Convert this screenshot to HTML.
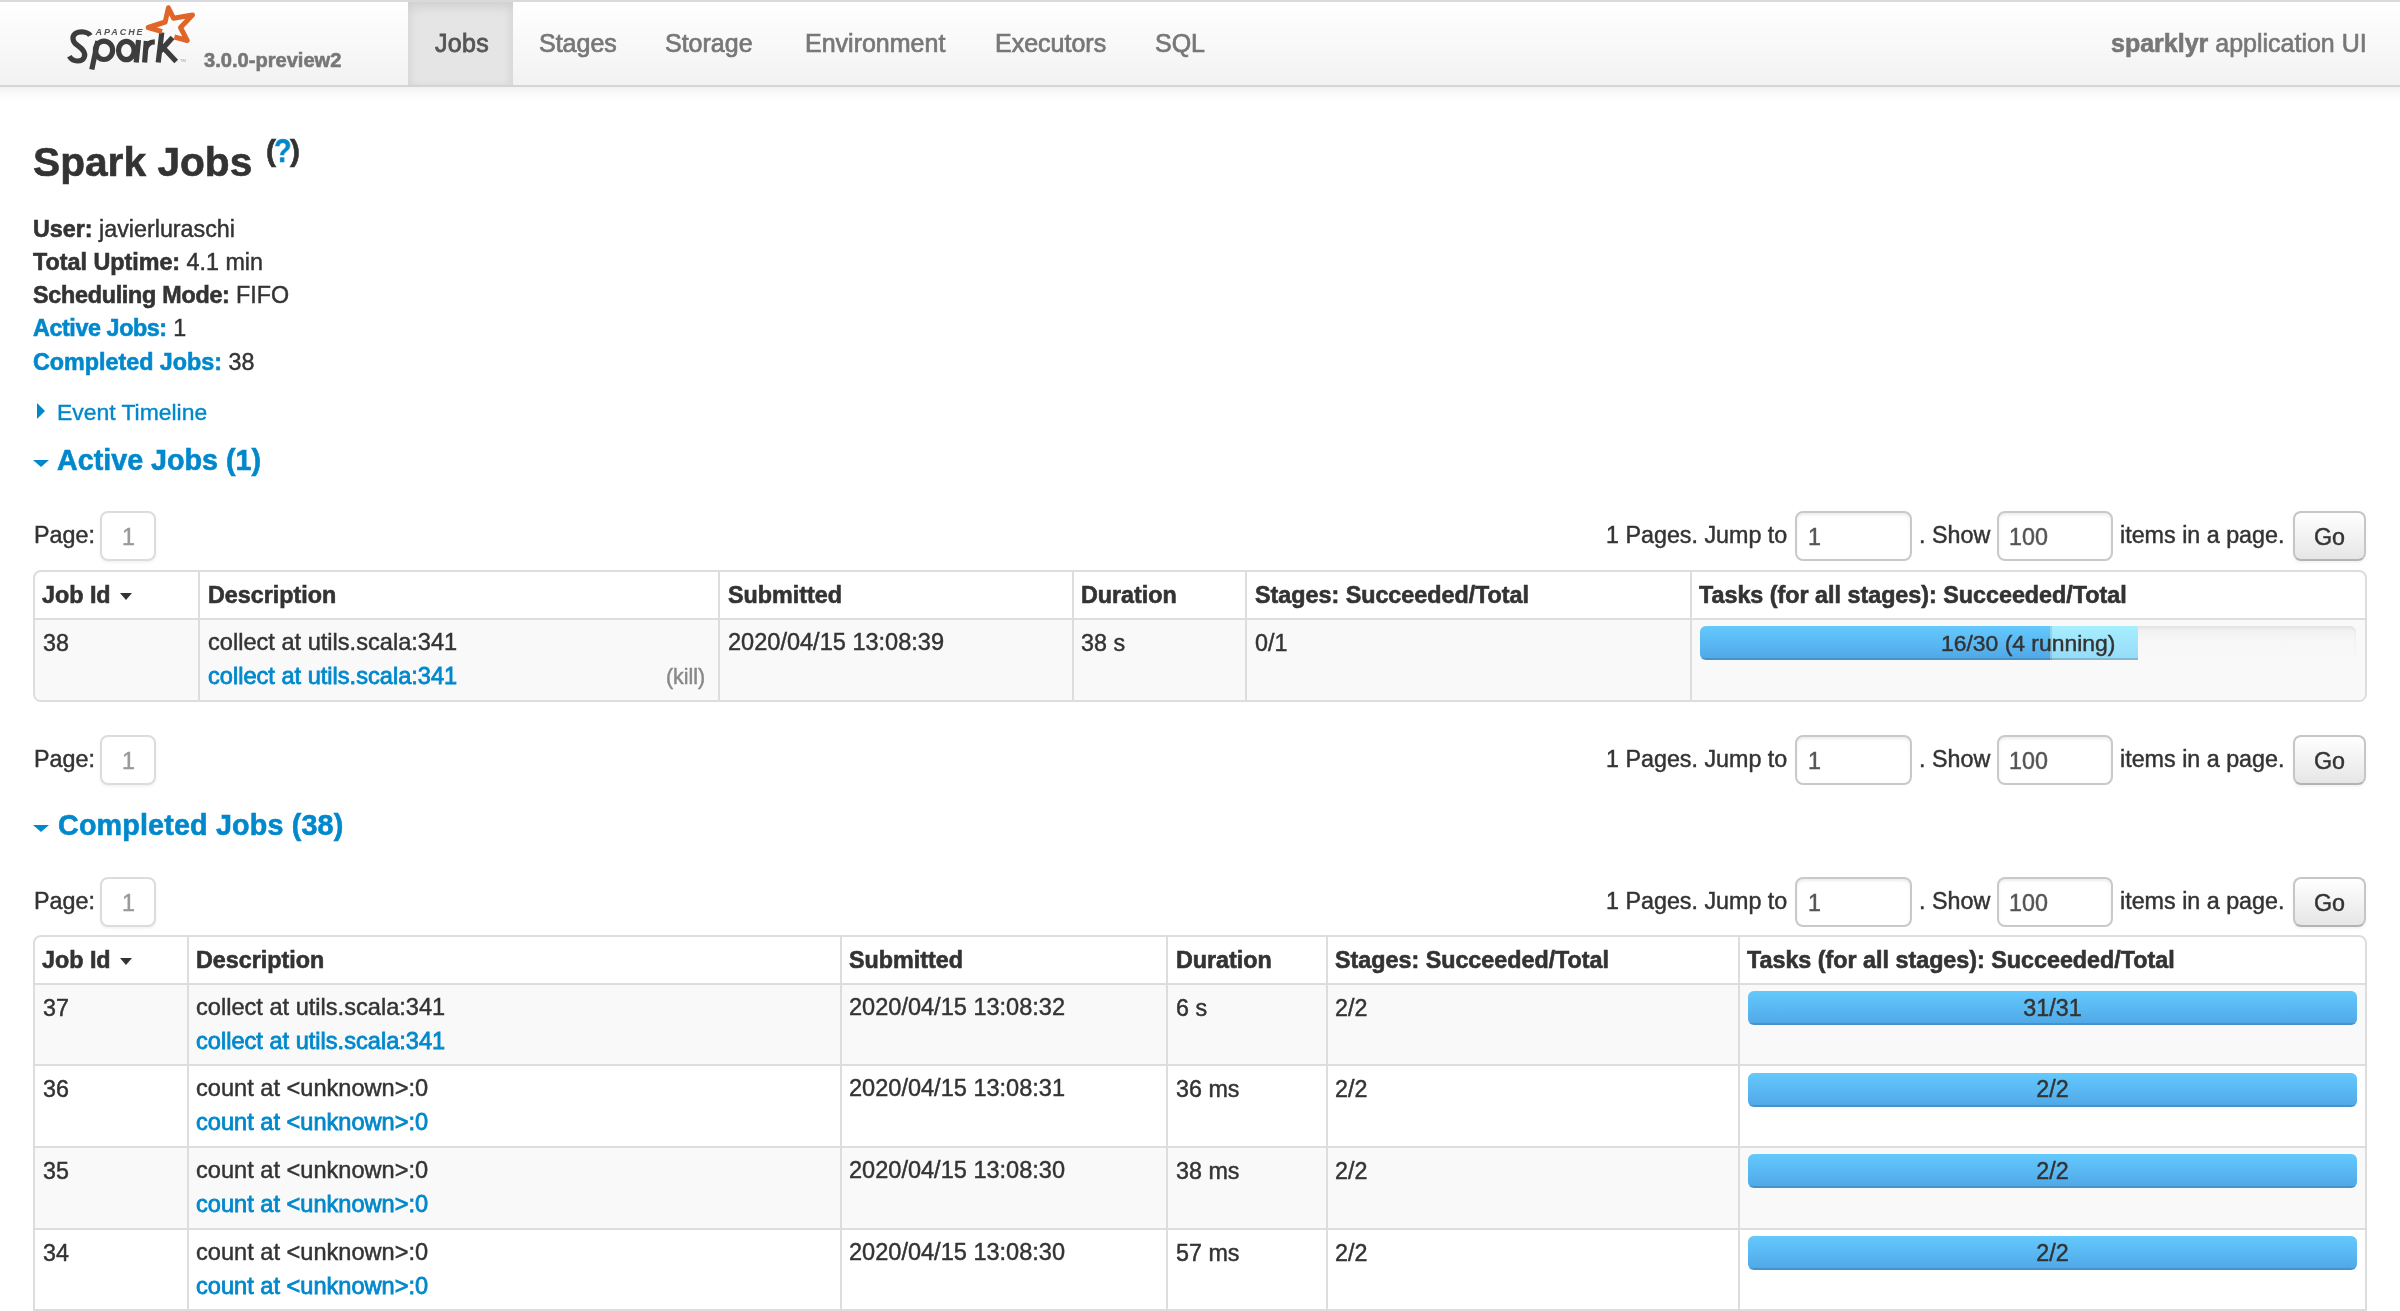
<!DOCTYPE html>
<html><head><meta charset="utf-8"><title>Spark Jobs</title>
<style>
html,body{margin:0;padding:0;background:#fff;width:2400px;height:1311px;overflow:hidden}
body{position:relative;font-family:"Liberation Sans",sans-serif;color:#333}
body div{position:absolute}
.t{white-space:nowrap;will-change:transform;-webkit-text-stroke:0.45px currentColor}
.t b{-webkit-text-stroke:0.6px currentColor}
</style></head><body>
<div style="left:0;top:0;width:2400px;height:2px;background:#d9dade"></div>
<div style="left:0;top:2px;width:2400px;height:83px;background:linear-gradient(#ffffff,#f2f2f2);"></div>
<div style="left:0;top:85px;width:2400px;height:2px;background:#d4d4d4"></div>
<div style="left:0;top:87px;width:2400px;height:15px;background:linear-gradient(rgba(0,0,0,0.055),rgba(0,0,0,0.02) 45%,rgba(0,0,0,0))"></div>
<div style="left:408px;top:2px;width:105px;height:83px;background:#e5e5e5;box-shadow:inset 0 4px 12px rgba(0,0,0,0.11)"></div>
<div class="t" style="left:434.70px;top:27.34px;font-size:25px;line-height:32px;color:#555;letter-spacing:0.3px;-webkit-text-stroke:0.8px currentColor">Jobs</div>
<div class="t" style="left:538.60px;top:27.34px;font-size:25px;line-height:32px;color:#777;-webkit-text-stroke:0.7px currentColor">Stages</div>
<div class="t" style="left:665.20px;top:27.34px;font-size:25px;line-height:32px;color:#777;-webkit-text-stroke:0.7px currentColor">Storage</div>
<div class="t" style="left:804.70px;top:27.34px;font-size:25px;line-height:32px;color:#777;-webkit-text-stroke:0.7px currentColor">Environment</div>
<div class="t" style="left:994.70px;top:27.34px;font-size:25px;line-height:32px;color:#777;-webkit-text-stroke:0.7px currentColor">Executors</div>
<div class="t" style="left:1155.20px;top:27.34px;font-size:25px;line-height:32px;color:#777;-webkit-text-stroke:0.7px currentColor">SQL</div>
<div class="t" style="left:2110.70px;top:27.34px;font-size:25px;line-height:32px;color:#777;-webkit-text-stroke:0.6px currentColor"><b>sparklyr</b> application UI</div>
<div class="t" style="left:204.20px;top:47.04px;font-size:20.1px;line-height:26px;color:#777;font-weight:bold;-webkit-text-stroke:0.6px currentColor;">3.0.0-preview2</div>
<svg style="position:absolute;left:0;top:0" width="220" height="85" viewBox="0 0 220 85">
<g fill="none" stroke="#3d3d3d" stroke-width="5.2" stroke-linecap="butt">
<path d="M90.3,35.5 C88,31.8 80,30.6 75.8,33.2 C71.2,36.2 72.5,41.8 77.2,45.2 C82,48.8 86.2,52.2 84.2,57.2 C82,62.3 73,62.5 69.3,56.2"/>
<ellipse cx="104" cy="50.3" rx="8.6" ry="9.2"/>
<path d="M97.8,41 L91.8,69.5"/>
<ellipse cx="126.3" cy="50.5" rx="7.8" ry="9.2"/>
<path d="M138.5,40 L136.2,62.5"/>
<path d="M146.3,41 L144.6,62.5 M145.6,50 C146.5,44 150,41.8 154.8,41.8"/>
<path d="M161.8,32.5 L158.2,62.5 M160.5,51 L172.5,37.5 M163.5,48 L176.2,61.5"/>
</g>
<path d="M162,31.7 L148.2,27.5 L165.2,22 L168.4,7.8 L173.6,18.3 L192.5,15 L180.5,27.5 L187.2,40.5 L174.4,37" fill="none" stroke="#e0652a" stroke-width="5" stroke-linejoin="round"/>
<text x="95.6" y="35.2" font-family="Liberation Sans" font-weight="bold" font-style="italic" font-size="9" fill="#555" textLength="47" lengthAdjust="spacing">APACHE</text>
<text x="180" y="62" font-family="Liberation Sans" font-size="4" fill="#999">TM</text>
</svg>
<div class="t" style="left:32.95px;top:136.30px;font-size:40.7px;line-height:53px;color:#333;font-weight:bold;-webkit-text-stroke:0.6px currentColor;">Spark Jobs</div>
<div class="t" style="left:265.70px;top:130.91px;font-size:30px;line-height:39px;color:#333;font-weight:bold;-webkit-text-stroke:0.6px currentColor;">(</div>
<div class="t" style="left:290.40px;top:130.91px;font-size:30px;line-height:39px;color:#333;font-weight:bold;-webkit-text-stroke:0.6px currentColor;">)</div>
<div class="t" style="left:273.6px;top:130.77px;font-size:33px;line-height:40px;font-weight:bold;color:#0088cc;-webkit-text-stroke:0.4px currentColor;transform:scaleX(0.87);transform-origin:0 0">?</div>
<div class="t" style="left:32.95px;top:213.83px;font-size:23.3px;line-height:30px;color:#333;"><b>User:</b> javierluraschi</div>
<div class="t" style="left:32.95px;top:246.93px;font-size:23.3px;line-height:30px;color:#333;"><b>Total Uptime:</b> 4.1 min</div>
<div class="t" style="left:32.95px;top:280.13px;font-size:23.3px;line-height:30px;color:#333;"><b style="letter-spacing:-0.25px">Scheduling Mode:</b> FIFO</div>
<div class="t" style="left:32.95px;top:313.23px;font-size:23.3px;line-height:30px;color:#333;"><b style="color:#0088cc;letter-spacing:-0.4px">Active Jobs:</b> 1</div>
<div class="t" style="left:32.95px;top:346.53px;font-size:23.3px;line-height:30px;color:#333;"><b style="color:#0088cc">Completed Jobs:</b> 38</div>
<div style="left:36.9px;top:402.5px;width:0;height:0;border-top:8px solid transparent;border-bottom:8px solid transparent;border-left:8px solid #0088cc"></div>
<div class="t" style="left:56.80px;top:397.07px;font-size:22.9px;line-height:30px;color:#0088cc;-webkit-text-stroke:0.8px currentColor;-webkit-text-stroke:0.4px currentColor">Event Timeline</div>
<div style="left:33px;top:459.7px;width:0;height:0;border-left:8.4px solid transparent;border-right:8.4px solid transparent;border-top:7.8px solid #0088cc"></div>
<div class="t" style="left:56.80px;top:442.36px;font-size:28.7px;line-height:37px;color:#0088cc;font-weight:bold;-webkit-text-stroke:0.6px currentColor;">Active Jobs (1)</div>
<div class="t" style="left:33.80px;top:519.93px;font-size:23.3px;line-height:30px;color:#333;">Page:</div>
<div style="left:100px;top:511px;width:56.4px;height:49.5px;border:2px solid #dcdcdc;border-radius:8px;box-sizing:border-box;background:#fff;box-shadow:0 2px 3px rgba(0,0,0,0.05)"></div>
<div class="t" style="left:122.20px;top:521.93px;font-size:23.3px;line-height:30px;color:#999;">1</div>
<div class="t" style="left:1605.80px;top:519.93px;font-size:23.3px;line-height:30px;color:#333;">1 Pages. Jump to</div>
<div style="left:1795px;top:511px;width:116.5px;height:50px;border:2px solid #c9c9c9;border-radius:8px;box-sizing:border-box;background:#fff;box-shadow:inset 0 2px 3px rgba(0,0,0,0.075)"></div>
<div class="t" style="left:1807.60px;top:521.93px;font-size:23.3px;line-height:30px;color:#555;">1</div>
<div class="t" style="left:1919.00px;top:519.93px;font-size:23.3px;line-height:30px;color:#333;">. Show</div>
<div style="left:1997px;top:511px;width:115.8px;height:50px;border:2px solid #c9c9c9;border-radius:8px;box-sizing:border-box;background:#fff;box-shadow:inset 0 2px 3px rgba(0,0,0,0.075)"></div>
<div class="t" style="left:2009.30px;top:521.93px;font-size:23.3px;line-height:30px;color:#555;">100</div>
<div class="t" style="left:2120.20px;top:519.93px;font-size:23.3px;line-height:30px;color:#333;">items in a page.</div>
<div style="left:2292.5px;top:511px;width:73.5px;height:50px;border:2px solid #c6c6c6;border-bottom-color:#b3b3b3;border-radius:8px;box-sizing:border-box;background:linear-gradient(#ffffff,#e6e6e6);box-shadow:0 2px 3px rgba(0,0,0,0.05)"></div>
<div class="t" style="left:2314.20px;top:522.23px;font-size:23.3px;line-height:30px;color:#333;">Go</div>
<div style="left:33px;top:570px;width:2334px;height:132px;border:2px solid #dddddd;border-radius:8px;box-sizing:border-box;background:#fff;overflow:hidden">
<div style="left:0;top:48px;width:2334px;height:80px;background:#f9f9f9"></div>
</div>
<div style="left:33px;top:618px;width:2334px;height:2px;background:#dddddd"></div>
<div style="left:198px;top:570px;width:2px;height:132px;background:#dddddd"></div>
<div style="left:718px;top:570px;width:2px;height:132px;background:#dddddd"></div>
<div style="left:1072px;top:570px;width:2px;height:132px;background:#dddddd"></div>
<div style="left:1245px;top:570px;width:2px;height:132px;background:#dddddd"></div>
<div style="left:1690px;top:570px;width:2px;height:132px;background:#dddddd"></div>
<div class="t" style="left:42.20px;top:579.93px;font-size:23.3px;line-height:30px;color:#333;font-weight:bold;-webkit-text-stroke:0.6px currentColor;">Job Id</div>
<div class="t" style="left:207.70px;top:579.93px;font-size:23.3px;line-height:30px;color:#333;font-weight:bold;-webkit-text-stroke:0.6px currentColor;">Description</div>
<div class="t" style="left:728.20px;top:579.93px;font-size:23.3px;line-height:30px;color:#333;font-weight:bold;-webkit-text-stroke:0.6px currentColor;">Submitted</div>
<div class="t" style="left:1080.80px;top:579.93px;font-size:23.3px;line-height:30px;color:#333;font-weight:bold;-webkit-text-stroke:0.6px currentColor;">Duration</div>
<div class="t" style="left:1255.20px;top:579.93px;font-size:23.3px;line-height:30px;color:#333;font-weight:bold;-webkit-text-stroke:0.6px currentColor;">Stages: Succeeded/Total</div>
<div class="t" style="left:1699.20px;top:579.93px;font-size:23.3px;line-height:30px;color:#333;font-weight:bold;-webkit-text-stroke:0.6px currentColor;">Tasks (for all stages): Succeeded/Total</div>
<div style="left:119.8px;top:592.9px;width:0;height:0;border-left:6.6px solid transparent;border-right:6.6px solid transparent;border-top:7.8px solid #333"></div>
<div class="t" style="left:42.70px;top:627.93px;font-size:23.3px;line-height:30px;color:#333;">38</div>
<div class="t" style="left:207.70px;top:627.32px;font-size:23.6px;line-height:31px;color:#333;">collect at utils.scala:341</div>
<div class="t" style="left:207.70px;top:660.82px;font-size:23.6px;line-height:31px;color:#0088cc;-webkit-text-stroke:0.8px currentColor;">collect at utils.scala:341</div>
<div class="t" style="left:665.90px;top:663.08px;font-size:21.4px;line-height:28px;color:#888;">(kill)</div>
<div class="t" style="left:728.20px;top:627.34px;font-size:23.55px;line-height:31px;color:#333;">2020/04/15 13:08:39</div>
<div class="t" style="left:1080.80px;top:627.93px;font-size:23.3px;line-height:30px;color:#333;">38 s</div>
<div class="t" style="left:1255.20px;top:627.93px;font-size:23.3px;line-height:30px;color:#333;">0/1</div>
<div style="left:1700px;top:626px;width:656px;height:34px;border-radius:6px;overflow:hidden;background:linear-gradient(#eeeeee,#f7f7f7 40%,#f9f9f9);box-shadow:inset 0 2px 3px rgba(0,0,0,0.06)"><div style="left:0;top:0;width:350px;height:34px;background:linear-gradient(#64c9fd,#4fa7e6);box-shadow:inset 0 -2px 0 rgba(0,0,0,0.12)"></div><div style="left:350px;top:0;width:88px;height:34px;background:linear-gradient(#a7eeff,#96dbf8);box-shadow:inset 0 -2px 0 rgba(0,0,0,0.15),inset 2px 0 0 rgba(0,0,0,0.1)"></div></div>
<div class="t" style="left:1940.70px;top:627.57px;font-size:22.9px;line-height:30px;color:#333;">16/30 (4 running)</div>
<div class="t" style="left:33.80px;top:743.93px;font-size:23.3px;line-height:30px;color:#333;">Page:</div>
<div style="left:100px;top:735px;width:56.4px;height:49.5px;border:2px solid #dcdcdc;border-radius:8px;box-sizing:border-box;background:#fff;box-shadow:0 2px 3px rgba(0,0,0,0.05)"></div>
<div class="t" style="left:122.20px;top:745.93px;font-size:23.3px;line-height:30px;color:#999;">1</div>
<div class="t" style="left:1605.80px;top:743.93px;font-size:23.3px;line-height:30px;color:#333;">1 Pages. Jump to</div>
<div style="left:1795px;top:735px;width:116.5px;height:50px;border:2px solid #c9c9c9;border-radius:8px;box-sizing:border-box;background:#fff;box-shadow:inset 0 2px 3px rgba(0,0,0,0.075)"></div>
<div class="t" style="left:1807.60px;top:745.93px;font-size:23.3px;line-height:30px;color:#555;">1</div>
<div class="t" style="left:1919.00px;top:743.93px;font-size:23.3px;line-height:30px;color:#333;">. Show</div>
<div style="left:1997px;top:735px;width:115.8px;height:50px;border:2px solid #c9c9c9;border-radius:8px;box-sizing:border-box;background:#fff;box-shadow:inset 0 2px 3px rgba(0,0,0,0.075)"></div>
<div class="t" style="left:2009.30px;top:745.93px;font-size:23.3px;line-height:30px;color:#555;">100</div>
<div class="t" style="left:2120.20px;top:743.93px;font-size:23.3px;line-height:30px;color:#333;">items in a page.</div>
<div style="left:2292.5px;top:735px;width:73.5px;height:50px;border:2px solid #c6c6c6;border-bottom-color:#b3b3b3;border-radius:8px;box-sizing:border-box;background:linear-gradient(#ffffff,#e6e6e6);box-shadow:0 2px 3px rgba(0,0,0,0.05)"></div>
<div class="t" style="left:2314.20px;top:746.23px;font-size:23.3px;line-height:30px;color:#333;">Go</div>
<div style="left:33px;top:825px;width:0;height:0;border-left:8.4px solid transparent;border-right:8.4px solid transparent;border-top:7.8px solid #0088cc"></div>
<div class="t" style="left:58.00px;top:807.36px;font-size:28.7px;line-height:37px;color:#0088cc;font-weight:bold;-webkit-text-stroke:0.6px currentColor;letter-spacing:0.17px;">Completed Jobs (38)</div>
<div class="t" style="left:33.80px;top:885.93px;font-size:23.3px;line-height:30px;color:#333;">Page:</div>
<div style="left:100px;top:877px;width:56.4px;height:49.5px;border:2px solid #dcdcdc;border-radius:8px;box-sizing:border-box;background:#fff;box-shadow:0 2px 3px rgba(0,0,0,0.05)"></div>
<div class="t" style="left:122.20px;top:887.93px;font-size:23.3px;line-height:30px;color:#999;">1</div>
<div class="t" style="left:1605.80px;top:885.93px;font-size:23.3px;line-height:30px;color:#333;">1 Pages. Jump to</div>
<div style="left:1795px;top:877px;width:116.5px;height:50px;border:2px solid #c9c9c9;border-radius:8px;box-sizing:border-box;background:#fff;box-shadow:inset 0 2px 3px rgba(0,0,0,0.075)"></div>
<div class="t" style="left:1807.60px;top:887.93px;font-size:23.3px;line-height:30px;color:#555;">1</div>
<div class="t" style="left:1919.00px;top:885.93px;font-size:23.3px;line-height:30px;color:#333;">. Show</div>
<div style="left:1997px;top:877px;width:115.8px;height:50px;border:2px solid #c9c9c9;border-radius:8px;box-sizing:border-box;background:#fff;box-shadow:inset 0 2px 3px rgba(0,0,0,0.075)"></div>
<div class="t" style="left:2009.30px;top:887.93px;font-size:23.3px;line-height:30px;color:#555;">100</div>
<div class="t" style="left:2120.20px;top:885.93px;font-size:23.3px;line-height:30px;color:#333;">items in a page.</div>
<div style="left:2292.5px;top:877px;width:73.5px;height:50px;border:2px solid #c6c6c6;border-bottom-color:#b3b3b3;border-radius:8px;box-sizing:border-box;background:linear-gradient(#ffffff,#e6e6e6);box-shadow:0 2px 3px rgba(0,0,0,0.05)"></div>
<div class="t" style="left:2314.20px;top:888.23px;font-size:23.3px;line-height:30px;color:#333;">Go</div>
<div style="left:33px;top:935px;width:2334px;height:465px;border:2px solid #dddddd;border-radius:8px;box-sizing:border-box;background:#fff;overflow:hidden">
<div style="left:0;top:48px;width:2334px;height:79px;background:#f9f9f9"></div>
<div style="left:0;top:211px;width:2334px;height:80px;background:#f9f9f9"></div>
</div>
<div style="left:33px;top:983px;width:2334px;height:2px;background:#dddddd"></div>
<div style="left:33px;top:1064px;width:2334px;height:2px;background:#dddddd"></div>
<div style="left:33px;top:1146px;width:2334px;height:2px;background:#dddddd"></div>
<div style="left:33px;top:1228px;width:2334px;height:2px;background:#dddddd"></div>
<div style="left:33px;top:1309px;width:2334px;height:2px;background:#dddddd"></div>
<div style="left:187px;top:935px;width:2px;height:465px;background:#dddddd"></div>
<div style="left:840px;top:935px;width:2px;height:465px;background:#dddddd"></div>
<div style="left:1166px;top:935px;width:2px;height:465px;background:#dddddd"></div>
<div style="left:1326px;top:935px;width:2px;height:465px;background:#dddddd"></div>
<div style="left:1738px;top:935px;width:2px;height:465px;background:#dddddd"></div>
<div class="t" style="left:42.20px;top:944.93px;font-size:23.3px;line-height:30px;color:#333;font-weight:bold;-webkit-text-stroke:0.6px currentColor;">Job Id</div>
<div class="t" style="left:196.20px;top:944.93px;font-size:23.3px;line-height:30px;color:#333;font-weight:bold;-webkit-text-stroke:0.6px currentColor;">Description</div>
<div class="t" style="left:849.20px;top:944.93px;font-size:23.3px;line-height:30px;color:#333;font-weight:bold;-webkit-text-stroke:0.6px currentColor;">Submitted</div>
<div class="t" style="left:1176.00px;top:944.93px;font-size:23.3px;line-height:30px;color:#333;font-weight:bold;-webkit-text-stroke:0.6px currentColor;">Duration</div>
<div class="t" style="left:1335.20px;top:944.93px;font-size:23.3px;line-height:30px;color:#333;font-weight:bold;-webkit-text-stroke:0.6px currentColor;">Stages: Succeeded/Total</div>
<div class="t" style="left:1747.20px;top:944.93px;font-size:23.3px;line-height:30px;color:#333;font-weight:bold;-webkit-text-stroke:0.6px currentColor;">Tasks (for all stages): Succeeded/Total</div>
<div style="left:119.8px;top:957.9px;width:0;height:0;border-left:6.6px solid transparent;border-right:6.6px solid transparent;border-top:7.8px solid #333"></div>
<div class="t" style="left:42.70px;top:992.93px;font-size:23.3px;line-height:30px;color:#333;">37</div>
<div class="t" style="left:196.20px;top:992.32px;font-size:23.6px;line-height:31px;color:#333;">collect at utils.scala:341</div>
<div class="t" style="left:196.20px;top:1026.02px;font-size:23.6px;line-height:31px;color:#0088cc;-webkit-text-stroke:0.8px currentColor;">collect at utils.scala:341</div>
<div class="t" style="left:849.20px;top:992.34px;font-size:23.55px;line-height:31px;color:#333;">2020/04/15 13:08:32</div>
<div class="t" style="left:1176.00px;top:992.93px;font-size:23.3px;line-height:30px;color:#333;">6 s</div>
<div class="t" style="left:1335.20px;top:992.93px;font-size:23.3px;line-height:30px;color:#333;">2/2</div>
<div style="left:1748px;top:991px;width:609px;height:34px;border-radius:6px;overflow:hidden;background:linear-gradient(#eeeeee,#f7f7f7 40%,#f9f9f9);box-shadow:inset 0 2px 3px rgba(0,0,0,0.06)"><div style="left:0;top:0;width:609px;height:34px;background:linear-gradient(#64c9fd,#4fa7e6);box-shadow:inset 0 -2px 0 rgba(0,0,0,0.12)"></div></div>
<div class="t" style="left:1748px;width:609px;text-align:center;top:992.93px;font-size:23.3px;line-height:30px;color:#333">31/31</div>
<div class="t" style="left:42.70px;top:1073.93px;font-size:23.3px;line-height:30px;color:#333;">36</div>
<div class="t" style="left:196.20px;top:1073.32px;font-size:23.6px;line-height:31px;color:#333;">count at &lt;unknown&gt;:0</div>
<div class="t" style="left:196.20px;top:1107.02px;font-size:23.6px;line-height:31px;color:#0088cc;-webkit-text-stroke:0.8px currentColor;">count at &lt;unknown&gt;:0</div>
<div class="t" style="left:849.20px;top:1073.34px;font-size:23.55px;line-height:31px;color:#333;">2020/04/15 13:08:31</div>
<div class="t" style="left:1176.00px;top:1073.93px;font-size:23.3px;line-height:30px;color:#333;">36 ms</div>
<div class="t" style="left:1335.20px;top:1073.93px;font-size:23.3px;line-height:30px;color:#333;">2/2</div>
<div style="left:1748px;top:1073px;width:609px;height:34px;border-radius:6px;overflow:hidden;background:linear-gradient(#eeeeee,#f7f7f7 40%,#f9f9f9);box-shadow:inset 0 2px 3px rgba(0,0,0,0.06)"><div style="left:0;top:0;width:609px;height:34px;background:linear-gradient(#64c9fd,#4fa7e6);box-shadow:inset 0 -2px 0 rgba(0,0,0,0.12)"></div></div>
<div class="t" style="left:1748px;width:609px;text-align:center;top:1073.93px;font-size:23.3px;line-height:30px;color:#333">2/2</div>
<div class="t" style="left:42.70px;top:1155.93px;font-size:23.3px;line-height:30px;color:#333;">35</div>
<div class="t" style="left:196.20px;top:1155.32px;font-size:23.6px;line-height:31px;color:#333;">count at &lt;unknown&gt;:0</div>
<div class="t" style="left:196.20px;top:1189.02px;font-size:23.6px;line-height:31px;color:#0088cc;-webkit-text-stroke:0.8px currentColor;">count at &lt;unknown&gt;:0</div>
<div class="t" style="left:849.20px;top:1155.34px;font-size:23.55px;line-height:31px;color:#333;">2020/04/15 13:08:30</div>
<div class="t" style="left:1176.00px;top:1155.93px;font-size:23.3px;line-height:30px;color:#333;">38 ms</div>
<div class="t" style="left:1335.20px;top:1155.93px;font-size:23.3px;line-height:30px;color:#333;">2/2</div>
<div style="left:1748px;top:1154px;width:609px;height:34px;border-radius:6px;overflow:hidden;background:linear-gradient(#eeeeee,#f7f7f7 40%,#f9f9f9);box-shadow:inset 0 2px 3px rgba(0,0,0,0.06)"><div style="left:0;top:0;width:609px;height:34px;background:linear-gradient(#64c9fd,#4fa7e6);box-shadow:inset 0 -2px 0 rgba(0,0,0,0.12)"></div></div>
<div class="t" style="left:1748px;width:609px;text-align:center;top:1155.93px;font-size:23.3px;line-height:30px;color:#333">2/2</div>
<div class="t" style="left:42.70px;top:1237.93px;font-size:23.3px;line-height:30px;color:#333;">34</div>
<div class="t" style="left:196.20px;top:1237.32px;font-size:23.6px;line-height:31px;color:#333;">count at &lt;unknown&gt;:0</div>
<div class="t" style="left:196.20px;top:1271.02px;font-size:23.6px;line-height:31px;color:#0088cc;-webkit-text-stroke:0.8px currentColor;">count at &lt;unknown&gt;:0</div>
<div class="t" style="left:849.20px;top:1237.34px;font-size:23.55px;line-height:31px;color:#333;">2020/04/15 13:08:30</div>
<div class="t" style="left:1176.00px;top:1237.93px;font-size:23.3px;line-height:30px;color:#333;">57 ms</div>
<div class="t" style="left:1335.20px;top:1237.93px;font-size:23.3px;line-height:30px;color:#333;">2/2</div>
<div style="left:1748px;top:1236px;width:609px;height:34px;border-radius:6px;overflow:hidden;background:linear-gradient(#eeeeee,#f7f7f7 40%,#f9f9f9);box-shadow:inset 0 2px 3px rgba(0,0,0,0.06)"><div style="left:0;top:0;width:609px;height:34px;background:linear-gradient(#64c9fd,#4fa7e6);box-shadow:inset 0 -2px 0 rgba(0,0,0,0.12)"></div></div>
<div class="t" style="left:1748px;width:609px;text-align:center;top:1237.93px;font-size:23.3px;line-height:30px;color:#333">2/2</div>
</body></html>
